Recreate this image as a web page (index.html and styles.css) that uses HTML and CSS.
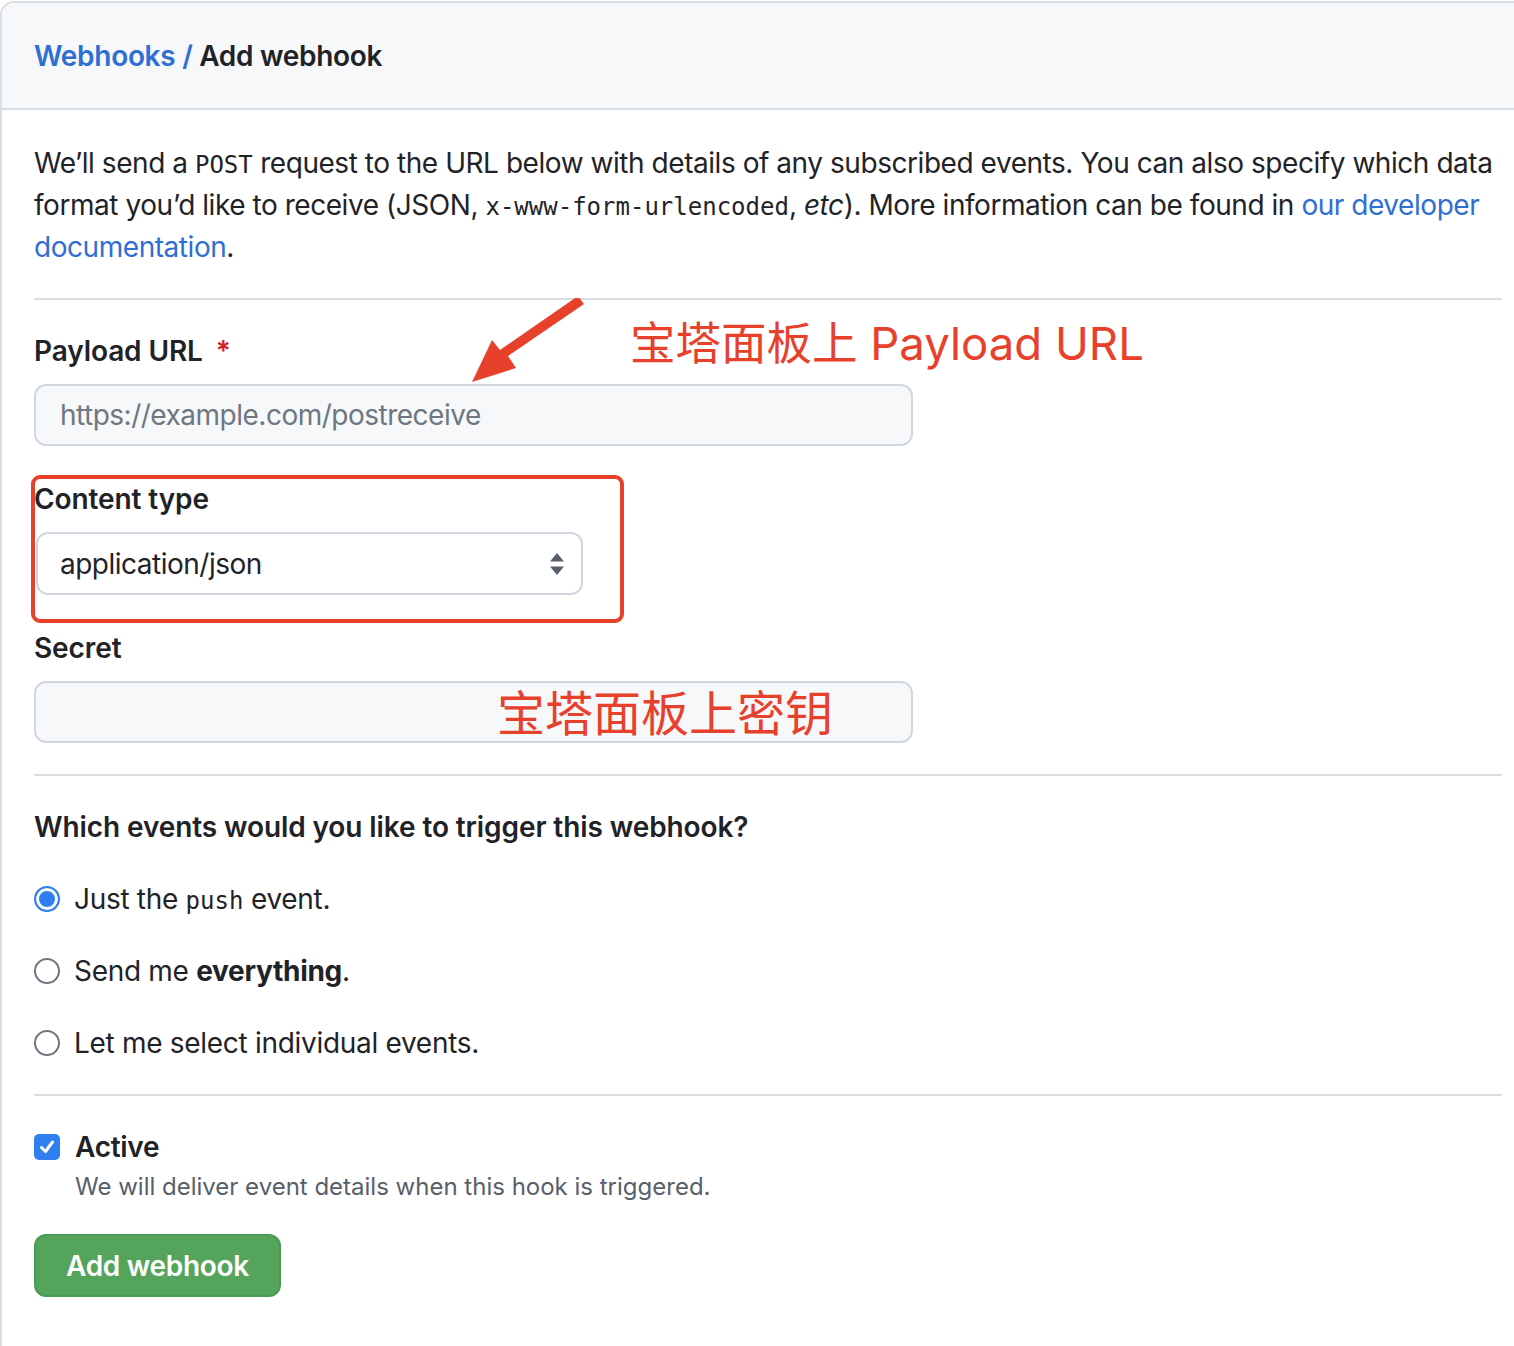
FILE: index.html
```html
<!DOCTYPE html>
<html lang="en">
<head>
<meta charset="utf-8">
<title>Add webhook</title>
<link rel="stylesheet" href="styles.css">
</head>
<body>
<div class="box">
  <div class="box-header">
    <h2 class="title"><a href="#" class="crumb">Webhooks</a> <span class="sep">/</span> Add webhook</h2>
  </div>
  <div class="box-body">
    <p class="intro">We’ll send a <code>POST</code> request to the URL below with details of any subscribed events. You can also specify which data format you’d like to receive (JSON, <code>x-www-form-urlencoded</code>, <em>etc</em>). More information can be found in <a href="#">our developer documentation</a>.</p>
    <hr class="rule">

    <div class="group group-url">
      <label class="label">Payload URL <span class="req">*</span></label>
      <div class="input placeholder">https://example.com/postreceive</div>
      <div class="note note-url">宝塔面板上 Payload URL</div>
      <svg class="arrow" width="130" height="90" viewBox="0 0 130 90">
        <path d="M118 6 L42 58 L50 70 L6 84 L26 42 L34 52 L112 -2 Z" fill="#e8412b"/>
      </svg>
    </div>

    <div class="group group-type">
      <label class="label">Content type</label>
      <div class="select">
        <span>application/json</span>
        <svg class="updown" width="16" height="24" viewBox="0 0 16 24"><path d="M8 1 L15 9.5 H1 Z M8 23 L1 14.5 H15 Z" fill="#57606a"/></svg>
      </div>
      <div class="highlight"></div>
    </div>

    <div class="group group-secret">
      <label class="label">Secret</label>
      <div class="input secret"><span class="note note-secret">宝塔面板上密钥</span></div>
    </div>

    <hr class="rule rule-2">

    <h3 class="question">Which events would you like to trigger this webhook?</h3>
    <div class="radios">
      <div class="radio-row"><span class="radio checked"></span><span>Just the <code class="code-sm">push</code> event.</span></div>
      <div class="radio-row"><span class="radio"></span><span>Send me <strong>everything</strong>.</span></div>
      <div class="radio-row"><span class="radio"></span><span>Let me select individual events.</span></div>
    </div>

    <hr class="rule rule-3">

    <div class="check-row">
      <span class="checkbox"><svg width="18" height="18" viewBox="0 0 18 18"><path d="M3.5 9.5 L7.5 13.5 L14.5 4" fill="none" stroke="#fff" stroke-width="3" stroke-linecap="round" stroke-linejoin="round"/></svg></span>
      <span class="check-label">Active</span>
    </div>
    <p class="hint">We will deliver event details when this hook is triggered.</p>

    <button class="btn">Add webhook</button>
  </div>
</div>
</body>
</html>
```

FILE: styles.css
```css
html, body {
  margin: 0;
  padding: 0;
  background: #ffffff;
  overflow: hidden;
}
body {
  font-family: Inter, "Noto Sans", sans-serif;
  color: #1f2328;
  font-size: 28px;
  line-height: 42px;
  letter-spacing: -0.3px;
}
.box {
  margin: 1px 0 0 0;
  width: 1560px;
  height: 1360px;
  border: 2px solid #d8dee4;
  border-radius: 14px;
  box-sizing: border-box;
  overflow: hidden;
}
.box-header {
  height: 105px;
  background: #f6f8fa;
  border-bottom: 2px solid #d8dee4;
  display: flex;
  align-items: center;
  padding-left: 32px;
}
.title {
  margin: 0;
  font-size: 28px;
  font-weight: 600;
  color: #1f2328;
}
.crumb, .sep { color: #2f6fd3; text-decoration: none; }
.box-body {
  padding: 32px 0 0 32px;
  width: 1468px;
}
.intro {
  margin: 0;
  width: 1476px;
  letter-spacing: -0.45px;
}
.intro a { color: #2f6fd3; text-decoration: none; }
code {
  font-family: "DejaVu Sans Mono", monospace;
  font-size: 24px;
  line-height: 1;
  letter-spacing: 0;
}
.rule {
  border: 0;
  border-top: 2px solid #d8dee4;
  margin: 30px 0 0 0;
}
.group {
  position: relative;
  margin-top: 30px;
}
.group-type { margin-top: 32px; }
.group-secret { margin-top: 32px; }
.label {
  display: block;
  font-weight: 600;
  margin-bottom: 12px;
  letter-spacing: -0.1px;
}
.req { color: #cf222e; margin-left: 6px; }
.input {
  width: 851px;
  height: 58px;
  border: 2px solid #d0d7de;
  border-radius: 12px;
  background: #f6f8fa;
  box-sizing: content-box;
  padding: 0 0 0 24px;
  display: flex;
  align-items: center;
}
.placeholder { color: #6e7781; letter-spacing: -0.5px; }
.select {
  width: 505px;
  height: 59px;
  margin-left: 2px;
  border: 2px solid #d0d7de;
  border-radius: 12px;
  background: #ffffff;
  padding: 0 16px 0 22px;
  display: flex;
  align-items: center;
  justify-content: space-between;
  letter-spacing: -0.5px;
}
.highlight {
  position: absolute;
  left: -3px;
  top: -3px;
  width: 585px;
  height: 140px;
  border: 4px solid #e8412b;
  border-radius: 9px;
}
.note {
  color: #e8412b;
  font-family: Inter, "Noto Sans CJK SC", sans-serif;
  font-weight: 400;
  letter-spacing: 0;
}
.note-url {
  position: absolute;
  left: 596px;
  top: -16px;
  font-size: 45.5px;
  line-height: 60px;
}
.arrow {
  position: absolute;
  left: 432px;
  top: -32px;
}
.secret { position: relative; }
.note-secret {
  position: absolute;
  left: 461px;
  top: 0;
  font-size: 48px;
  line-height: 62px;
}
.rule-2 { margin-top: 31px; }
.question {
  margin: 30px 0 0 0;
  font-size: 28px;
  font-weight: 600;
  letter-spacing: -0.1px;
}
.radios { margin-top: 30px; }
.radio-row {
  display: flex;
  align-items: center;
  gap: 14px;
  height: 42px;
  margin-bottom: 30px;
}
.radio {
  width: 22px;
  height: 22px;
  border: 2px solid #6e7781;
  border-radius: 50%;
  background: #fff;
  flex: none;
}
.radio.checked {
  border: 2px solid #2f7ff0;
  background: #2f7ff0;
  box-shadow: inset 0 0 0 3px #fff;
}
.code-sm { font-size: 24px; }
.rule-3 { margin-top: 0; }
.check-row {
  display: flex;
  align-items: center;
  gap: 15px;
  margin-top: 30px;
  height: 42px;
}
.checkbox {
  width: 26px;
  height: 26px;
  background: #2f7ff0;
  border-radius: 5px;
  display: flex;
  align-items: center;
  justify-content: center;
}
.check-label { font-weight: 600; }
.hint {
  margin: 0 0 0 41px;
  font-size: 24px;
  line-height: 38px;
  color: #57606a;
  letter-spacing: 0;
}
.btn {
  margin-top: 28px;
  width: 247px;
  height: 63px;
  background: #55a45c;
  border: 2px solid #4a9a52;
  border-radius: 12px;
  color: #fff;
  font-family: Inter, sans-serif;
  font-size: 28px;
  font-weight: 600;
  letter-spacing: -0.3px;
}
```
